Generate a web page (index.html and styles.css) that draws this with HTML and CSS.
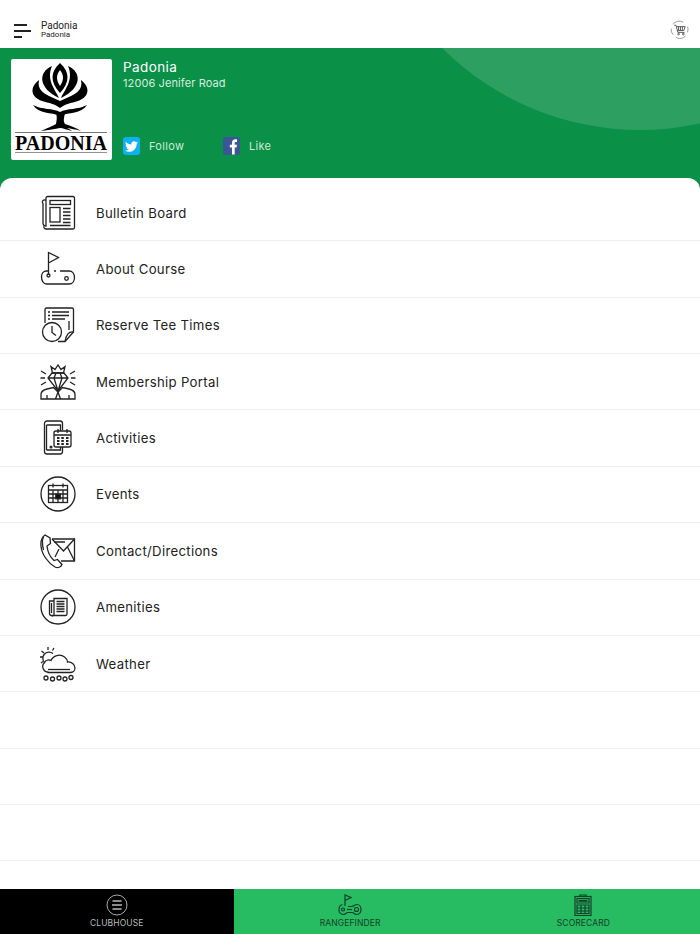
FILE: index.html
```html
<!DOCTYPE html>
<html lang="en">
<head>
  <meta charset="UTF-8" />
  <meta name="viewport" content="width=device-width, initial-scale=1.0"/>
  <title>Padonia</title>
  <link rel="stylesheet" href="styles.css">
</head>
<body>
  <div class="page">
    <div class="topbar">
      <svg class="menu-icon" viewBox="0 0 17 14"><path d="M0 1h13M0 7h17M0 13h8"/></svg>
      <div class="topbar-title">
        <div class="club-name">Padonia</div>
        <div class="club-sub">Padonia</div>
      </div>
      <svg class="cart-icon" viewBox="0 0 20 20">
        <path class="thin" d="M14 2.200A8.800 8.800 0 0 0 3 4.500M1.200 9a8.800 8.800 0 0 0 2 6.500M6 18.200a8.800 8.800 0 0 0 10.500-1.500M18.400 13a8.800 8.800 0 0 0 .2-6"/>
        <path d="M4.500 5.500h1.800l2 7.500h7M6.800 7h9.200l-1.400 4H8"/>
        <path d="M9 7v4M11 7v4M13 7v4"/>
        <circle cx="9" cy="14.800" r=".9"/><circle cx="14" cy="14.800" r=".9"/>
      </svg>
    </div>

    <div class="hero">
      <div class="hero-circle"></div>
      <div class="logo-card">
        <svg class="logo" viewBox="0 0 101 101">
          <path d="M41 7C27 13 27 29 48 39C44 30 35 21 41 7Z"/>
          <path d="M57 7C71 13 71 29 50 39C54 30 63 21 57 7Z"/>
          <path fill-rule="evenodd" d="M49 4C39 13 39 23 49 34C59 23 59 13 49 4ZM49 11C53 16 53 21 49 27C45 21 45 16 49 11Z"/>
          <path d="M28 21C18 29 20 38 31 42C38 44 44 45 49 49C54 45 60 44 67 42C78 38 80 29 70 21C72 30 66 34 60 37L49 42L38 37C32 34 26 30 28 21Z"/>
          <path d="M22 46C31 51 42 49 49 53C56 49 67 51 76 46C70 55 58 53 49 57C40 53 28 55 22 46Z"/>
          <path d="M45 54H54C53 59 52 62 54 65C60 67 66 69 70 72C64 70 60 70 56 69C58 70 60 71 61 72C56 71 52 69 49 69C44 70 38 71 30 72C36 69 42 67 45 65C46 60 46 57 45 54Z"/>
          <rect x="4" y="73" width="92" height=".8" fill="#555"/>
          <text class="logo-text" x="4" y="90.500" textLength="92" lengthAdjust="spacingAndGlyphs">PADONIA</text>
          <rect x="4" y="93" width="92" height=".8" fill="#777"/>
        </svg>
      </div>
      <div class="hero-info">
        <div class="hero-name">Padonia</div>
        <div class="hero-address">12006 Jenifer Road</div>
        <div class="social">
          <div class="social-item">
            <span class="social-badge twitter">
              <svg viewBox="0 0 24 24"><path d="M23.953 4.570a10 10 0 01-2.825.775 4.958 4.958 0 002.163-2.723c-.951.555-2.005.959-3.127 1.184a4.920 4.920 0 00-8.384 4.482C7.690 8.095 4.067 6.130 1.640 3.162a4.822 4.822 0 00-.666 2.475c0 1.710.870 3.213 2.188 4.096a4.904 4.904 0 01-2.228-.616v.060a4.923 4.923 0 003.946 4.827 4.996 4.996 0 01-2.212.085 4.936 4.936 0 004.604 3.417 9.867 9.867 0 01-6.102 2.105c-.390 0-.779-.023-1.170-.067a13.995 13.995 0 007.557 2.209c9.053 0 13.998-7.496 13.998-13.985 0-.210 0-.420-.015-.630A9.935 9.935 0 0024 4.590z"/></svg>
            </span>
            <span>Follow</span>
          </div>
          <div class="social-item">
            <span class="social-badge facebook">
              <svg viewBox="0 0 17 17"><path d="M9 17V10H6.800V7.200H9V5.200C9 3 10.300 1.800 12.300 1.800H14V4.400H12.800C11.900 4.400 11.700 4.900 11.700 5.500V7.200H14L13.600 10H11.700V17Z"/></svg>
            </span>
            <span>Like</span>
          </div>
        </div>
      </div>
    </div>

    <div class="list">
      <div class="row">
        <svg class="row-icon" viewBox="0 0 36 36">
          <path d="M6 5.500V31a3 3 0 0 1-3-3V8.500a2 2 0 0 1 3-3ZM3.500 31.500A3 3 0 0 0 6 34H33a1.500 1.500 0 0 0 1.500-1.500V3A1.500 1.500 0 0 0 33 1.500H7.500A1.500 1.500 0 0 0 6 3V31"/>
          <rect x="10" y="5.500" width="20.500" height="4"/>
          <rect x="10" y="12.500" width="10" height="14.500"/>
          <path d="M23 13.500h7.500M23 17h7.500M23 20.500h7.500M23 24h7.500M23 27.500h7.500M10 30.500h20.500"/>
        </svg>
        <span class="row-label">Bulletin Board</span>
      </div>
      <div class="row">
        <svg class="row-icon" viewBox="0 0 36 36">
          <path d="M8.500 24V1.500L18.500 6.500L8.500 12"/>
          <path d="M8.500 20H6.500C3.500 20 1.500 22.500 1.500 26S3.500 33 6.500 33H29C32.500 33 34.500 30 34.500 26.500S32.500 20 29 20H20M14 20h2"/>
          <circle cx="8.500" cy="24.500" r="1.500"/>
          <circle cx="26.500" cy="27.500" r="1.800"/>
        </svg>
        <span class="row-label">About Course</span>
      </div>
      <div class="row">
        <svg class="row-icon" viewBox="0 0 36 36">
          <path d="M5 16V2.500A1.500 1.500 0 0 1 6.500 1H32a1.500 1.500 0 0 1 1.500 1.500V25L25 34.500H18"/>
          <path d="M33.500 25C29 24 26 28 25 34.500"/>
          <path d="M8 5h2M12 5h17M8 8.500h2M12 8.500h17M8 12h2M12 12h13M29 14v9"/>
          <circle cx="12" cy="25" r="9.500"/>
          <path d="M12 19v6.500l4 3"/>
        </svg>
        <span class="row-label">Reserve Tee Times</span>
      </div>
      <div class="row">
        <svg class="row-icon" viewBox="0 0 36 36">
          <path d="M12.500 9L11 2.500L15 5.500L18 1L21 5.500L25 2.500L23.500 9Z"/>
          <path d="M12 9H24L28 14L18 27L8 14ZM8 14H28M14 14L18 27L22 14M14 14L16 9M22 14L20 9"/>
          <path d="M1 7L6 10M35 7L30 10M0.500 14H5M35.500 14H31M1 21L6 18M35 21L30 18"/>
          <path d="M1 35V30.500C1 27.500 3 26 7 25L13.500 23.500L18 28L22.500 23.500L29 25C33 26 35 27.500 35 30.500V35ZM18 28L15.500 35M18 28L20.500 35M7 31V35M29 31V35"/>
        </svg>
        <span class="row-label">Membership Portal</span>
      </div>
      <div class="row">
        <svg class="row-icon" viewBox="0 0 36 36">
          <path d="M22.500 10V3.500A2.500 2.500 0 0 0 20 1H7A2.500 2.500 0 0 0 4.500 3.500V31.500A2.500 2.500 0 0 0 7 34H20A2.500 2.500 0 0 0 22.500 31.500V27"/>
          <path d="M6.500 5V30M6.500 5H20.500V11M20.500 27V30H6.500"/>
          <circle cx="11" cy="27" r=".9"/>
          <rect x="14" y="11" width="17" height="16" rx="2"/>
          <path d="M14 15H31M18 9V13M27 9V13"/>
          <path class="fat" d="M17 18h2.500M21.300 18h2.500M26 18h2.500M17 21h2.500M21.300 21h2.500M26 21h2.500M17 24h2.500M21.300 24h2.500M26 24h2.500"/>
        </svg>
        <span class="row-label">Activities</span>
      </div>
      <div class="row">
        <svg class="row-icon" viewBox="0 0 36 36">
          <circle cx="18" cy="18" r="17"/>
          <rect x="8.500" y="9.500" width="19" height="17"/>
          <path d="M8.500 14H27.500M8.500 18H27.500M8.500 22H27.500M13 14V26.500M18 14V26.500M23 14V26.500M13 7.500V11.500M23 7.500V11.500"/>
          <rect class="solid" x="15.800" y="18.300" width="4.500" height="4.500"/>
        </svg>
        <span class="row-label">Events</span>
      </div>
      <div class="row">
        <svg class="row-icon" viewBox="0 0 36 36">
          <path d="M5 2C2 4 0.500 8 1 13C1.500 21 8 30 15 34C18 35.500 21 34 22 31.500L17.500 26.500L14 27.500C10 24 7.500 18 7 13L10.500 10.500L10 5L5 2Z"/>
          <path d="M12 6H34.500V28H21"/>
          <path d="M12 6L23.500 18L34.500 6M15 24L19 16M34.500 28L27.500 14"/>
          <path d="M14 9H25M3.500 4C2 7 2.500 13 3.500 17"/>
        </svg>
        <span class="row-label">Contact/Directions</span>
      </div>
      <div class="row">
        <svg class="row-icon" viewBox="0 0 36 36">
          <circle cx="18" cy="18" r="17"/>
          <path d="M14 12H9.500V24.500A2 2 0 0 0 11.500 26.500H25.500A1.500 1.500 0 0 0 27 25V9.500H14V25A1.500 1.500 0 0 1 11.500 26.500"/>
          <path d="M16.500 12.500H24.500M16.500 15H24.500M16.500 17.500H24.500M16.500 20H24.500M16.500 22.500H24.500M11.500 14V24"/>
        </svg>
        <span class="row-label">Amenities</span>
      </div>
      <div class="row">
        <svg class="row-icon" viewBox="0 0 36 36">
          <path d="M5 17A6 6 0 0 1 13 7.500"/>
          <path d="M8 1V4M1.500 5L4 7M0 11H3M1 17L3 15.500M14 2L12.500 4.500"/>
          <path d="M8 26A5.500 5.500 0 0 1 4.500 16.500C6 14 9 13.500 11 14.500C13 9.500 20 7.500 24.500 11C26.500 12.500 27.500 14.500 27.500 16C32 15.500 35 19 35 22C35 25 32.500 26.500 30 26.500H8Z"/>
          <path d="M8 23.500H30"/>
          <circle cx="6" cy="32" r="2"/><circle cx="12.500" cy="33" r="2"/><circle cx="19" cy="32" r="2"/><circle cx="25" cy="33" r="2"/><circle cx="31" cy="31.500" r="2"/>
        </svg>
        <span class="row-label">Weather</span>
      </div>
      <div class="row"></div>
      <div class="row"></div>
      <div class="row"></div>
    </div>

    <div class="tabbar">
      <div class="tab tab-active">
        <svg class="tab-icon" viewBox="0 0 22 22">
          <circle cx="11" cy="11" r="10"/>
          <path class="fat" d="M6.500 7H15.500M6 11H16M6.500 15H15.500"/>
        </svg>
        <span>CLUBHOUSE</span>
      </div>
      <div class="tab">
        <svg class="tab-icon" viewBox="0 0 24 22">
          <path d="M7 12V1L13 3.500L7 6.500"/>
          <path d="M4.500 10.500C2 11 1 13 1 15.500S2.500 20.500 5 20.500C7.500 20.500 8 18.500 10 18.500H14C16 18.500 16.500 20.500 19 20.500S23 18 23 15.500S21.500 10.500 19 10.500C16.500 10.500 16 12.500 14 12.500H10"/>
          <circle cx="5" cy="15.500" r="1.500"/><circle cx="18.500" cy="15.500" r="2"/>
          <path d="M9 15.500H14"/>
        </svg>
        <span>RANGEFINDER</span>
      </div>
      <div class="tab">
        <svg class="tab-icon" viewBox="0 0 18 22">
          <rect x="1" y="2.500" width="16" height="19"/>
          <path d="M6 2.500V1H12V2.500M3 4.500H15V9H3ZM3 11H15V19.500H3ZM3 14H15M3 17H15M7 11V19.500M11 11V19.500"/>
          <path class="score-line" d="M4.500 6.800H13.500"/>
        </svg>
        <span>SCORECARD</span>
      </div>
    </div>
  </div>
</body>
</html>
```

FILE: styles.css
```css
body {
  margin: 0;
  font-family: 'Inter', 'Open Sans', sans-serif;
  background: #fff;
}

.page {
  width: 700px;
  height: 934px;
  display: flex;
  flex-direction: column;
  overflow: hidden;
}

.topbar {
  height: 48px;
  flex: none;
  display: flex;
  align-items: flex-end;
  padding: 0 11px 9px 14px;
  box-sizing: border-box;
}

.menu-icon {
  width: 17px;
  height: 14px;
  margin-bottom: 1px;
  fill: none;
  stroke: #222;
  stroke-width: 1.800;
}

.topbar-title {
  margin-left: 10px;
  font-family: 'Roboto', sans-serif;
  color: #222;
}

.club-name {
  font-size: 10px;
  line-height: 11px;
}

.club-sub {
  font-size: 8px;
  line-height: 8px;
}

.cart-icon {
  width: 19px;
  height: 19px;
  margin-left: auto;
  margin-bottom: 0;
  fill: none;
  stroke: #555;
  stroke-width: 1;
}

.cart-icon .thin {
  stroke-width: .6;
}

.hero {
  position: relative;
  height: 142px;
  flex: none;
  display: flex;
  align-items: flex-start;
  padding: 11px;
  box-sizing: border-box;
  background: #0a9047;
  color: #fff;
  overflow: hidden;
}

.hero-circle {
  position: absolute;
  left: 360px;
  top: -478px;
  width: 560px;
  height: 560px;
  border-radius: 50%;
  background: rgba(255,255,255,0.14);
}

.logo-card {
  width: 101px;
  height: 101px;
  flex: none;
  background: #fff;
  border-radius: 2px;
}

.logo {
  display: block;
  width: 101px;
  height: 101px;
  fill: #000;
}

.logo-text {
  font-family: 'Liberation Serif', serif;
  font-size: 21px;
  font-weight: bold;
}

.hero-info {
  position: relative;
  margin-left: 11px;
  height: 101px;
  display: flex;
  flex-direction: column;
}

.hero-name {
  font-size: 13.500px;
  line-height: 16px;
  letter-spacing: 0.400px;
}

.hero-address {
  font-size: 11px;
  line-height: 17px;
  letter-spacing: 0.100px;
  color: #d6eedf;
}

.social {
  display: flex;
  margin-top: 45px;
}

.social-item {
  width: 100px;
  display: flex;
  align-items: center;
  gap: 9px;
  font-size: 11px;
  letter-spacing: 0.300px;
  color: #cfe9d9;
}

.social-badge {
  width: 17px;
  height: 18px;
  border-radius: 3px;
  display: flex;
  align-items: center;
  justify-content: center;
  overflow: hidden;
}

.social-badge svg {
  fill: #fff;
}

.twitter {
  background: #0fb0f2;
}

.twitter svg {
  width: 13px;
  height: 13px;
}

.facebook {
  background: #3b5596;
}

.facebook svg {
  width: 17px;
  height: 18px;
}

.list {
  position: relative;
  flex: 1;
  margin-top: -12px;
  padding-top: 7px;
  background: #fff;
  border-radius: 12px 12px 0 0;
}

.row {
  height: 56.360px;
  box-sizing: border-box;
  display: flex;
  align-items: center;
  padding-left: 40px;
  border-bottom: 1px solid #eee;
}

.row-icon {
  width: 36px;
  height: 36px;
  flex: none;
  fill: none;
  stroke: #222;
  stroke-width: 1.300;
}

.row-icon .solid {
  fill: #111;
}

.row-icon .fat {
  stroke-width: 1.800;
}

.row-label {
  margin-left: 20px;
  font-size: 13.200px;
  letter-spacing: 0.300px;
  color: #222;
}

.tabbar {
  height: 45px;
  flex: none;
  display: grid;
  grid-template-columns: 233.500px 1fr 1fr;
  background: #27bb62;
  color: #14402a;
}

.tab {
  display: flex;
  flex-direction: column;
  align-items: center;
  padding-top: 5px;
  font-size: 8.500px;
  line-height: 11px;
  letter-spacing: 0.100px;
  box-sizing: border-box;
}

.tab-active {
  background: #000;
  color: #bbb;
}

.tab-icon {
  width: 24px;
  height: 22px;
  margin-bottom: 2px;
  fill: none;
  stroke: #14402a;
  stroke-width: 1.200;
}

.tab-active .tab-icon {
  stroke: #bbb;
  stroke-width: .9;
}

.tab-icon .fat {
  stroke-width: 1.600;
}

.tab-icon .score-line {
  stroke-width: 2;
}
```
